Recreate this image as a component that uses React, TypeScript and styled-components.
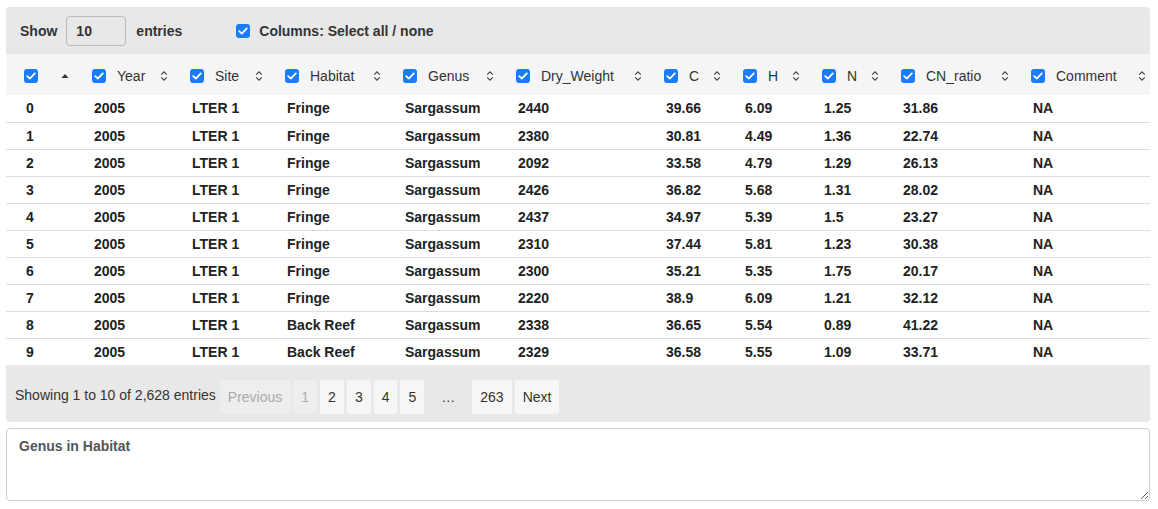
import React from 'react';
import styled, { createGlobalStyle } from 'styled-components';

const GlobalStyle = createGlobalStyle`
  body {
    margin: 0;
    background: #fff;
    font-family: 'Liberation Sans', Arial, sans-serif;
    color: #333;
  }
`;

const Page = styled.div`
  padding: 7px 8px 8px 6px;
  display: flex;
  flex-direction: column;
`;

const TopBar = styled.div`
  display: flex;
  align-items: center;
  height: 47px;
  padding-left: 14px;
  background: #e8e8e8;
  border-radius: 4px 4px 0 0;
  font-size: 14px;
  font-weight: bold;
  color: #333;
`;

const ShowInput = styled.div`
  width: 60px;
  height: 30px;
  box-sizing: border-box;
  margin: 0 10px 0 9px;
  padding-left: 9px;
  display: flex;
  align-items: center;
  border: 1px solid #b9b9b9;
  border-radius: 4px;
  font-weight: bold;
`;

const ColumnsToggle = styled.label`
  display: flex;
  align-items: center;
  gap: 9px;
  margin-left: 54px;
`;

const Box = styled.span`
  width: 14px;
  height: 14px;
  flex: none;
  border-radius: 3px;
  background: #1a7cf9;
  display: inline-flex;
  align-items: center;
  justify-content: center;
`;

const TableWrap = styled.div`
  overflow: hidden;
`;

const Table = styled.table`
  width: 1154px;
  table-layout: fixed;
  border-collapse: separate;
  border-spacing: 0;
  font-size: 14px;
`;

const HeadRow = styled.tr`
  background: #f5f5f5;
`;

const HeadCell = styled.th<{ $first?: boolean }>`
  height: 41px;
  box-sizing: border-box;
  padding: 2px 14px 0 ${(p) => (p.$first ? 18 : 8)}px;
  font-weight: normal;
  color: #333;
  text-align: left;
`;

const HeadInner = styled.div`
  display: flex;
  align-items: center;
  gap: 11px;
`;

const SortIcon = styled.span`
  margin-left: auto;
  display: inline-flex;
`;

const BodyRow = styled.tr``;

const Cell = styled.td<{ $first?: boolean; $lined?: boolean }>`
  height: ${(p) => (p.$lined ? 25 : 26)}px;
  padding: 0 0 1px ${(p) => (p.$first ? 20 : 10)}px;
  border-top: ${(p) => (p.$lined ? '1px solid #dcdcdc' : 'none')};
  font-weight: bold;
  color: #222;
  white-space: nowrap;
`;

const Footer = styled.div`
  display: flex;
  align-items: center;
  height: 57px;
  box-sizing: border-box;
  padding: 6px 0 0 9px;
  background: #e8e8e8;
  border-radius: 0 0 4px 4px;
  font-size: 14px;
  color: #333;
`;

const Info = styled.span`
  margin-top: -4px;
  margin-right: 4px;
`;

const Pager = styled.div`
  display: flex;
  align-items: center;
  gap: 3px;
`;

const PageBtn = styled.span<{ $disabled?: boolean; $plain?: boolean }>`
  height: 34px;
  padding: 0 ${(p) => (p.$plain ? 14 : 8)}px;
  display: inline-flex;
  align-items: center;
  border-radius: 3px;
  background: ${(p) => (p.$plain ? 'transparent' : p.$disabled ? '#eeeeee' : '#f6f6f6')};
  color: ${(p) => (p.$disabled ? '#aaa' : '#333')};
`;

const Notes = styled.textarea`
  margin-top: 6px;
  height: 73px;
  box-sizing: border-box;
  padding: 9px 12px;
  border: 1px solid #cfcfcf;
  border-radius: 4px;
  font-family: 'Liberation Sans', Arial, sans-serif;
  font-size: 14px;
  font-weight: bold;
  color: #555;
  outline: none;
`;

const Check = () => (
  <Box>
    <svg width="10" height="8" viewBox="0 0 10 8">
      <path d="M1.2 4.2 L3.8 6.6 L8.8 1.4" fill="none" stroke="#fff" strokeWidth="1.8" strokeLinecap="round" strokeLinejoin="round" />
    </svg>
  </Box>
);

const Sortable = () => (
  <svg width="8" height="12" viewBox="0 0 8 12">
    <path d="M1.2 4.6 L4 1.8 L6.8 4.6 M1.2 7.4 L4 10.2 L6.8 7.4" fill="none" stroke="#444" strokeWidth="1.2" />
  </svg>
);

const SortedAsc = () => (
  <svg width="8" height="6" viewBox="0 0 8 6">
    <path d="M0.5 5 L4 1 L7.5 5 Z" fill="#333" />
  </svg>
);

const columns = ['Year', 'Site', 'Habitat', 'Genus', 'Dry_Weight', 'C', 'H', 'N', 'CN_ratio', 'Comment'];
const widths = [78, 98, 95, 118, 113, 148, 79, 79, 79, 130, 137];

const rows: string[][] = [
  ['2005', 'LTER 1', 'Fringe', 'Sargassum', '2440', '39.66', '6.09', '1.25', '31.86', 'NA'],
  ['2005', 'LTER 1', 'Fringe', 'Sargassum', '2380', '30.81', '4.49', '1.36', '22.74', 'NA'],
  ['2005', 'LTER 1', 'Fringe', 'Sargassum', '2092', '33.58', '4.79', '1.29', '26.13', 'NA'],
  ['2005', 'LTER 1', 'Fringe', 'Sargassum', '2426', '36.82', '5.68', '1.31', '28.02', 'NA'],
  ['2005', 'LTER 1', 'Fringe', 'Sargassum', '2437', '34.97', '5.39', '1.5', '23.27', 'NA'],
  ['2005', 'LTER 1', 'Fringe', 'Sargassum', '2310', '37.44', '5.81', '1.23', '30.38', 'NA'],
  ['2005', 'LTER 1', 'Fringe', 'Sargassum', '2300', '35.21', '5.35', '1.75', '20.17', 'NA'],
  ['2005', 'LTER 1', 'Fringe', 'Sargassum', '2220', '38.9', '6.09', '1.21', '32.12', 'NA'],
  ['2005', 'LTER 1', 'Back Reef', 'Sargassum', '2338', '36.65', '5.54', '0.89', '41.22', 'NA'],
  ['2005', 'LTER 1', 'Back Reef', 'Sargassum', '2329', '36.58', '5.55', '1.09', '33.71', 'NA'],
];

const App = () => {
  return (
    <>
      <GlobalStyle />
      <Page>
        <TopBar>
          Show
          <ShowInput>10</ShowInput>
          entries
          <ColumnsToggle>
            <Check />
            Columns: Select all / none
          </ColumnsToggle>
        </TopBar>
        <TableWrap>
          <Table>
            <colgroup>
              {widths.map((w, i) => (
                <col key={i} style={{ width: w }} />
              ))}
            </colgroup>
            <thead>
              <HeadRow>
                <HeadCell $first>
                  <HeadInner>
                    <Check />
                    <SortIcon style={{ marginRight: 1 }}>
                      <SortedAsc />
                    </SortIcon>
                  </HeadInner>
                </HeadCell>
                {columns.map((c) => (
                  <HeadCell key={c}>
                    <HeadInner>
                      <Check />
                      {c}
                      <SortIcon>
                        <Sortable />
                      </SortIcon>
                    </HeadInner>
                  </HeadCell>
                ))}
              </HeadRow>
            </thead>
            <tbody>
              {rows.map((r, i) => (
                <BodyRow key={i}>
                  <Cell $first $lined={i > 0}>{i}</Cell>
                  {r.map((v, j) => (
                    <Cell key={j} $lined={i > 0}>{v}</Cell>
                  ))}
                </BodyRow>
              ))}
            </tbody>
          </Table>
        </TableWrap>
        <Footer>
          <Info>Showing 1 to 10 of 2,628 entries</Info>
          <Pager>
            <PageBtn $disabled>Previous</PageBtn>
            <PageBtn $disabled>1</PageBtn>
            <PageBtn>2</PageBtn>
            <PageBtn>3</PageBtn>
            <PageBtn>4</PageBtn>
            <PageBtn>5</PageBtn>
            <PageBtn $plain>…</PageBtn>
            <PageBtn>263</PageBtn>
            <PageBtn>Next</PageBtn>
          </Pager>
        </Footer>
        <Notes defaultValue="Genus in Habitat" />
      </Page>
    </>
  );
};

export default App;
